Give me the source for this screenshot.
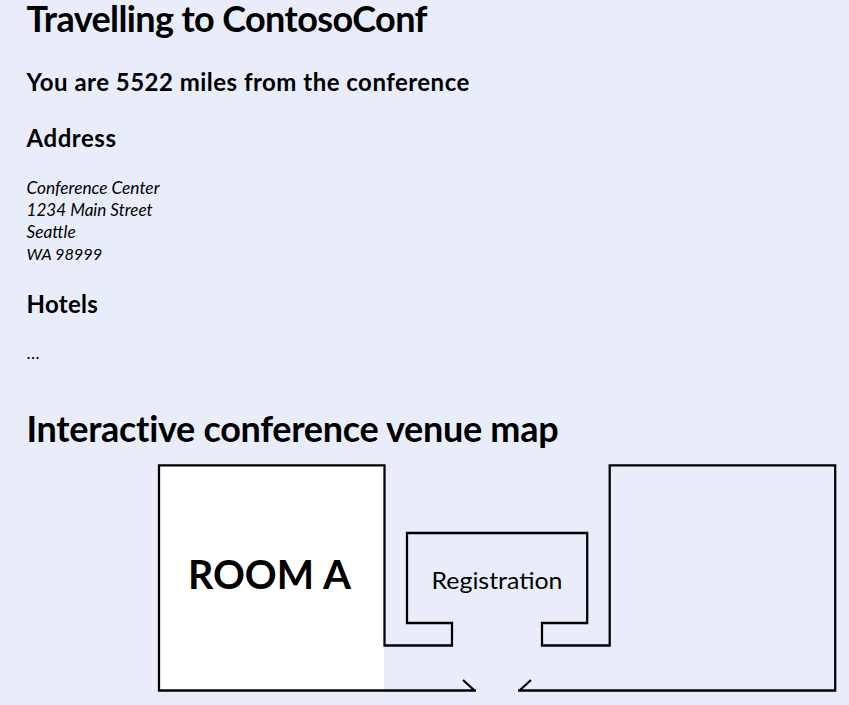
const stroke = { fill: "none", stroke: "#000", strokeWidth: 2.26 };

function VenueMap() {
  return (
    <svg className="block h-[250px] w-full" viewBox="0 455 849 250">
      <rect x="159" y="465" width="225" height="225.5" fill="#fff" />
      <path {...stroke} d="M476 690.5H159V465.3H384.5V645.5H452V623H407V533H587.2V623H542V645.5H609.7V465.3H835.2V690.5H518" />
      <path {...stroke} d="M463 680L474.5 690.5M531 680L519.5 690.5" />
      <text x="188" y="589" fontSize="39.5" fontWeight="700" textLength="126" lengthAdjust="spacingAndGlyphs">ROOM</text>
      <text x="323" y="589" fontSize="39.5" fontWeight="700" textLength="28" lengthAdjust="spacingAndGlyphs">A</text>
      <text x="431.5" y="588.5" fontSize="24" textLength="131" lengthAdjust="spacingAndGlyphs">Registration</text>
    </svg>
  );
}

export default function App() {
  return (
    <main className="min-h-[705px] w-full bg-[#e9edfa] font-['Lato','Open_Sans',sans-serif] text-black">
      <div className="h-[455px] pl-[26.5px]">
        <h1 className="text-[36px] leading-[37px] font-bold tracking-[-0.62px]">Travelling to ContosoConf</h1>
        <h2 className="mt-[30px] text-2xl leading-[30px] font-bold tracking-[0.48px]">You are 5522 miles from the conference</h2>
        <h2 className="mt-[26px] text-2xl leading-[30px] font-bold tracking-[0.55px]">Address</h2>
        <address className="mt-[24px] text-[17.3px] leading-[22px]">
          Conference Center<br />
          <span className="text-[17.1px]">1234 Main Street</span><br />
          Seattle<br />
          <span className="text-[16.3px]">WA 98999</span>
        </address>
        <h2 className="mt-[24px] text-2xl leading-[30px] font-bold tracking-[0.3px]">Hotels</h2>
        <p className="mt-[23px] text-[17px] leading-[22px] tracking-[0.5px]">...</p>
        <h1 className="mt-[46px] text-[36px] leading-[37px] font-bold tracking-[-0.31px]">Interactive conference venue map</h1>
      </div>
      <VenueMap />
    </main>
  );
}
